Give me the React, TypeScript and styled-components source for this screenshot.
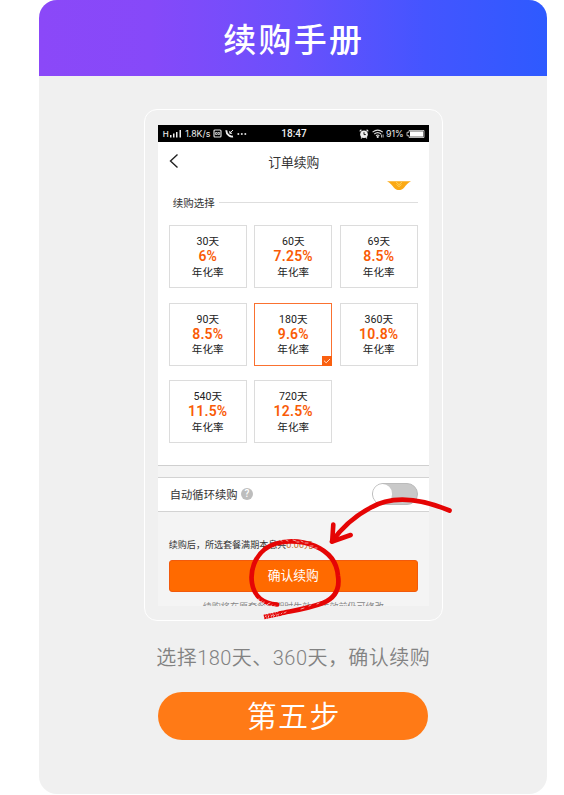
import React from 'react';
import styled, { createGlobalStyle } from 'styled-components';

const GlobalStyle = createGlobalStyle`
  * { box-sizing: border-box; }
  body {
    margin: 0;
    background: #fff;
    font-family: Roboto, "Noto Sans CJK SC", sans-serif;
    overflow: hidden;
  }
`;

const Page = styled.main`
  position: relative;
  width: 564px;
  height: 795px;
  padding-left: 38.5px;
`;

const Sheet = styled.section`
  width: 508.5px;
  height: 794px;
  border-radius: 18px;
  background: #f0f0f0;
  overflow: hidden;
  display: flex;
  flex-direction: column;
  align-items: center;
`;

const Banner = styled.header`
  width: 100%;
  height: 76px;
  flex: none;
  display: flex;
  align-items: center;
  justify-content: center;
  padding: 0 0 1px 2px;
  background: linear-gradient(90deg, #8b48f8 0%, #8649f9 22%, #6a50fc 50%, #4455ff 76%, #2e5aff 100%);
  color: #fff;
  font-size: 33px;
  font-weight: 500;
  letter-spacing: 2.3px;
`;

const PhoneFrame = styled.div`
  width: 299px;
  height: 512px;
  flex: none;
  margin: 33px 0 0 2px;
  padding: 14.5px 12.5px;
  border: 1.5px solid #fff;
  border-radius: 13px;
`;

const Screen = styled.div`
  width: 271px;
  height: 481px;
  background: #f4f4f4;
  overflow: hidden;
  display: flex;
  flex-direction: column;
`;

const StatusBar = styled.div`
  height: 17px;
  flex: none;
  background: #000;
  color: #eee;
  display: grid;
  grid-template-columns: 1fr auto 1fr;
  align-items: center;
  padding: 1px 3.5px 0 5px;
  line-height: 16px;
`;

const StatusGroup = styled.div<{ $end?: boolean }>`
  display: flex;
  align-items: center;
  gap: ${(p) => (p.$end ? '2.5px' : '3px')};
  justify-content: ${(p) => (p.$end ? 'flex-end' : 'flex-start')};
  font-family: Inter, Roboto, sans-serif;
  font-size: 8.8px;
  white-space: nowrap;
`;

const Network = styled.span`
  font-size: 8px;
  font-weight: 500;
  margin-right: -1.5px;
`;

const Clock = styled.span`
  font-size: 10px;
  font-weight: 500;
`;

const Main = styled.div`
  height: 324px;
  flex: none;
  background: #fff;
  border-bottom: 1.5px solid #cfcfcf;
`;

const TitleBar = styled.div`
  height: 39px;
  display: grid;
  grid-template-columns: 30px 1fr 30px;
  align-items: center;
  padding-left: 1px;
  color: #333;
  font-size: 12.8px;
  text-align: center;
`;

const BackIcon = styled.svg`
  margin-left: 10px;
`;

const CoinRow = styled.div`
  height: 11px;
  display: flex;
  justify-content: flex-end;
  padding-right: 18px;
`;

const SectionTitle = styled.div`
  display: flex;
  align-items: center;
  gap: 4px;
  height: 22px;
  padding: 0 11px 0 15px;
  color: #333;
  font-size: 10.5px;

  &::after {
    content: '';
    flex: 1;
    height: 1px;
    background: #dedede;
  }
`;

const PlanGrid = styled.div`
  display: grid;
  grid-template-columns: repeat(3, 78px);
  grid-auto-rows: 63px;
  gap: 14.5px 7.5px;
  padding: 11.6px 0 0 11px;
`;

const Plan = styled.div<{ $selected: boolean }>`
  position: relative;
  border: 1px solid ${(p) => (p.$selected ? '#fa7130' : '#dcdcdc')};
  display: flex;
  flex-direction: column;
  align-items: center;
  padding-top: 8px;
  color: #222;
  font-size: 10.6px;
  line-height: 15px;
`;

const Rate = styled.strong`
  color: #f95b06;
  font-size: 14px;
  font-weight: 600;
  letter-spacing: 0.2px;
  line-height: 15.5px;
`;

const SelectedMark = styled.svg`
  position: absolute;
  right: -1px;
  bottom: -1px;
`;

const AutoRow = styled.div`
  height: 35px;
  flex: none;
  margin-top: 11px;
  padding: 0 11px 0 12px;
  display: flex;
  align-items: center;
  background: #fff;
  border-top: 1.5px solid #d3d3d3;
  border-bottom: 1.5px solid #d3d3d3;
  color: #333;
  font-size: 11.3px;
`;

const Help = styled.span`
  width: 12px;
  height: 12px;
  margin: 0 auto 0 3.5px;
  border-radius: 50%;
  background: #bdbdbd;
  color: #fff;
  font-size: 10px;
  font-weight: 500;
  line-height: 12.5px;
  text-align: center;
`;

const Toggle = styled.span`
  width: 45.5px;
  height: 22px;
  border: 1px solid #bbb;
  border-radius: 11px;
  background: #c9c9c9;

  &::before {
    content: '';
    display: block;
    width: 19px;
    height: 20px;
    border-radius: 10px;
    background: #fff;
  }
`;

const Footer = styled.div`
  padding: 25px 11px 0;
`;

const Summary = styled.p`
  margin: 0;
  height: 23px;
  color: #333;
  font-size: 9.05px;
  line-height: 16px;
  white-space: nowrap;
`;

const Amount = styled.span`
  color: #c86a2a;
`;

const Confirm = styled.button`
  display: block;
  width: 249px;
  height: 32.5px;
  padding: 0;
  border: 1px solid #f25a0c;
  border-radius: 3px;
  background: #ff6a00;
  color: #fff;
  font-family: inherit;
  font-size: 12.8px;
  line-height: 29px;
`;

const FinePrint = styled.p`
  margin: 8.5px 0 0;
  color: #888;
  font-size: 9.05px;
  line-height: 12px;
  text-align: center;
  white-space: nowrap;
`;

const Caption = styled.p`
  margin: 22px 0 0 1px;
  color: #828282;
  font-size: 20px;
  font-weight: 350;
  letter-spacing: 0.46px;
  line-height: 30px;
  white-space: nowrap;
`;

const Digits = styled.span`
  font-weight: 350;
`;

const Step = styled.div`
  width: 270px;
  height: 48.5px;
  flex: none;
  margin-top: 18.5px;
  border-radius: 24.5px;
  background: #ff7a16;
  color: #fff;
  font-size: 30px;
  font-weight: 350;
  letter-spacing: 1.3px;
  line-height: 50px;
  padding-left: 2px;
  text-align: center;
`;

const Annotation = styled.svg`
  position: absolute;
  left: 0;
  top: 0;
  pointer-events: none;
`;

const plans = [
  { days: 30, rate: '6%' },
  { days: 60, rate: '7.25%' },
  { days: 69, rate: '8.5%' },
  { days: 90, rate: '8.5%' },
  { days: 180, rate: '9.6%', selected: true },
  { days: 360, rate: '10.8%' },
  { days: 540, rate: '11.5%' },
  { days: 720, rate: '12.5%' },
];

const Signal = () => (
  <svg width="12" height="9" viewBox="0 0 12 9" fill="#eee">
    <path d="M0 6h1.5v2.5H0zM3 4.5h1.5v4H3zM6 3h1.5v5.5H6zM9.5 1H11v7.5H9.5z" />
  </svg>
);

const SimCard = () => (
  <svg width="9" height="9" viewBox="0 0 9 9" fill="none" stroke="#ddd">
    <rect x="1" y="1" width="7" height="7" rx="1" strokeWidth="1.2" />
    <path d="M2.5 3.5h1.6v2H2.5zM5 3.5h1.6v2H5z" strokeWidth=".8" />
  </svg>
);

const Call = () => (
  <svg width="9" height="9" viewBox="0 0 9 9" fill="none" stroke="#eee">
    <path d="M1.3 1.2Q1.2 4.4 4 6.6 5.8 8 8 7.5" strokeWidth="1.9" />
    <path d="M8 1 5 4.1M4.8 2v2.3h2.3" strokeWidth="1" />
  </svg>
);

const Dots = () => (
  <svg width="10" height="4" viewBox="0 0 10 4" fill="#ddd">
    <circle cx="1.3" cy="2" r="1" /><circle cx="4.8" cy="2" r="1" /><circle cx="8.3" cy="2" r="1" />
  </svg>
);

const Alarm = () => (
  <svg width="10" height="10" viewBox="0 0 10 10">
    <circle cx="5" cy="5.3" r="3.8" fill="#eee" />
    <path d="M.7 2.4 2.4.8M9.3 2.4 7.6.8M2 9.3l1-1M8 9.3l-1-1" stroke="#eee" strokeWidth="1.2" />
    <path d="M5 3.2v2.4h1.8" stroke="#000" fill="none" strokeWidth=".9" />
  </svg>
);

const Wifi = () => (
  <svg width="12" height="9" viewBox="0 0 12 9" fill="none" stroke="#ddd" strokeWidth="1.1">
    <path d="M.6 3.2Q5.7-1 10.8 3.2M2.3 5Q5.7 2.2 9.1 5M4 6.7q1.7-1.3 3.4 0" />
    <circle cx="5.7" cy="7.9" r=".5" fill="#ddd" />
    <path d="M9.5 5.5v3M11.1 5.5v3" strokeWidth=".8" />
  </svg>
);

const Battery = () => (
  <svg width="19" height="8" viewBox="0 0 19 8">
    <path d="M3 .5h15v7H3v-1.8H1V2.3h2z" fill="none" stroke="#ccc" strokeWidth=".9" />
    <path d="M4 1.3h13.2v5.4H4z" fill="#fff" />
  </svg>
);

const Coin = () => (
  <svg width="24" height="10" viewBox="0 0 24 10">
    <path d="M0 .3h24C21 1.5 19.2 4 17 6.7 14.5 9.8 9.5 9.8 7 6.7 4.8 4 3 1.5 0 .3z" fill="#fba915" />
    <path d="m9 1 3 2.7L15 1M9.5 3.5 12 5.6l2.5-2.1" fill="none" stroke="#ffdc6b" strokeWidth=".8" />
  </svg>
);

const HandDrawnMarks = () => (
  <Annotation width="564" height="795" viewBox="0 0 564 795" fill="none" strokeLinecap="round">
    <g stroke="#e50505" strokeLinejoin="round">
      <path
        d="M277 604.5C263 603.5 254 596 252 583C250 570 255 557 265 549C278 539.5 299 539.5 315 546C329 552 337 562 338 576C340 589 335 598 323 603C307 609 291 611 280 613.5"
        strokeWidth="4.7"
      />
      <path d="M281 613.5 264 617" strokeWidth="4.6" strokeDasharray="2.6 .4 1.8 .3" strokeLinecap="butt" />
      <path d="M449.5 510.5C419 498 392 495 370 508C353 517 341 529 332 541.5" strokeWidth="4.7" />
      <path d="M333.3 524.5 332.2 541.5 350.7 535" strokeWidth="4.6" />
    </g>
    <g stroke="#f4e5e0" strokeWidth=".7">
      <path d="m257 600 2-1m0 4 3-2m0 4 2-2m2 3 2-2m1 3 3-2m0 2 3-1m-18-5 2-1m3 3 2-1m4 2 2-1" />
      <path d="m265 617 1-1m2 1 1-1m2 0 2-1m1 1 1-1m2 0 2-1m2 0 1-1m2 0 2-1" />
      <path d="m280 540 2 1m4-1 2 1m5-1 3 1m5 0 2 1m2 1 3 0m2 3 3 0m2 2 2 0m-20-6 2 0" />
      <path d="m301 609 3-1m5-2 2-1m6-1 2-1" />
    </g>
  </Annotation>
);

export default function App() {
  return (
    <Page>
      <GlobalStyle />
      <Sheet>
        <Banner>续购手册</Banner>
        <PhoneFrame>
          <Screen>
            <StatusBar>
              <StatusGroup>
                <Network>H</Network>
                <Signal />
                <span>1.8K/s</span>
                <SimCard />
                <Call />
                <Dots />
              </StatusGroup>
              <Clock>18:47</Clock>
              <StatusGroup $end>
                <Alarm />
                <Wifi />
                <span>91%</span>
                <Battery />
              </StatusGroup>
            </StatusBar>
            <Main>
              <TitleBar>
                <BackIcon width="10" height="16" viewBox="0 0 10 16" fill="none" stroke="#222" strokeWidth="1.4">
                  <path d="M8.5 1.5 1.5 8l7 6.5" />
                </BackIcon>
                <span>订单续购</span>
              </TitleBar>
              <CoinRow><Coin /></CoinRow>
              <SectionTitle>续购选择</SectionTitle>
              <PlanGrid>
                {plans.map((plan) => (
                  <Plan key={plan.days} $selected={!!plan.selected}>
                    <span>{plan.days}天</span>
                    <Rate>{plan.rate}</Rate>
                    <span>年化率</span>
                    {plan.selected && (
                      <SelectedMark width="10" height="10" viewBox="0 0 10 10">
                        <path d="M0 0h10v10H0z" fill="#fa6010" />
                        <path d="m2 4.7 2.2 2.1L8 3" fill="none" stroke="#ffe3d2" strokeWidth="1" />
                      </SelectedMark>
                    )}
                  </Plan>
                ))}
              </PlanGrid>
            </Main>
            <AutoRow>
              自动循环续购
              <Help>?</Help>
              <Toggle />
            </AutoRow>
            <Footer>
              <Summary>续购后，所选套餐满期本息共<Amount>0.00元</Amount></Summary>
              <Confirm>确认续购</Confirm>
              <FinePrint>续购将在原套餐到期时生效，生效前仍可修改</FinePrint>
            </Footer>
          </Screen>
        </PhoneFrame>
        <Caption>
          选择<Digits>180</Digits>天、<Digits>360</Digits>天，确认续购
        </Caption>
        <Step>第五步</Step>
      </Sheet>
      <HandDrawnMarks />
    </Page>
  );
}
